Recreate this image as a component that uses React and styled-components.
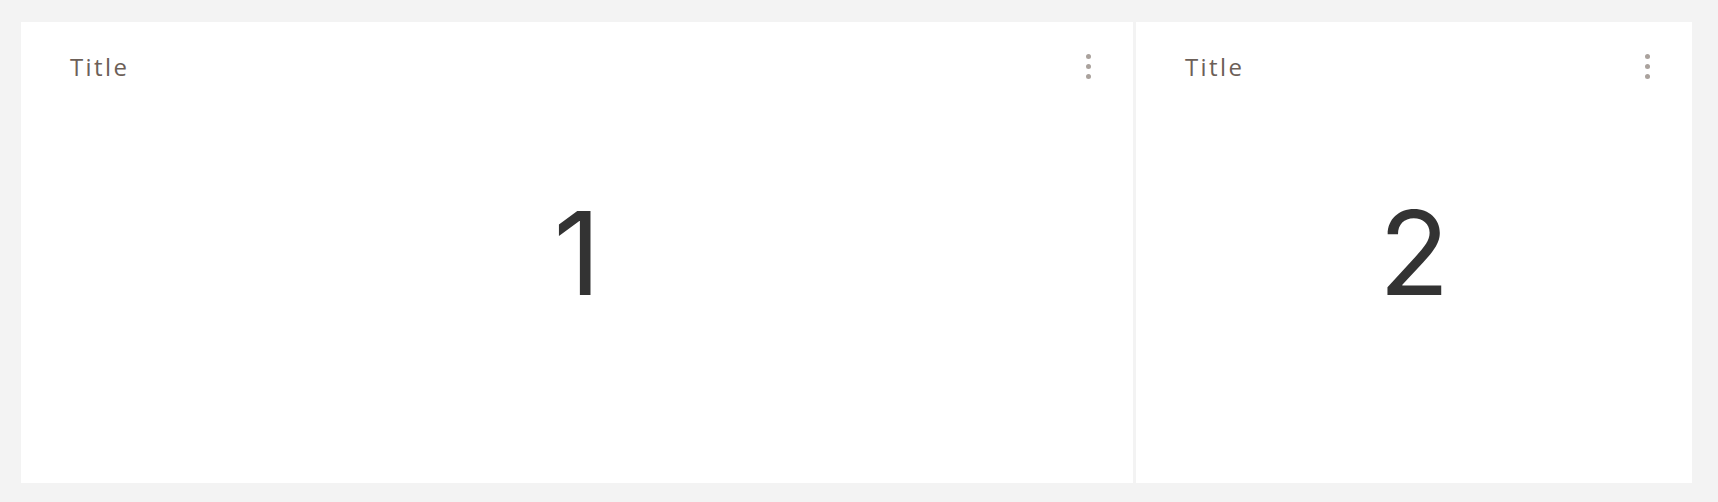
import React from 'react';
import styled, { createGlobalStyle } from 'styled-components';

const GlobalStyle = createGlobalStyle`
  html, body {
    margin: 0;
    padding: 0;
    background: #f3f3f3;
  }
  body {
    font-family: "Open Sans", "Liberation Sans", sans-serif;
  }
`;

const Board = styled.div`
  display: grid;
  grid-template-columns: 2fr 1fr;
  gap: 3px;
  padding: 22px 26px 19px 21px;
  height: 502px;
  box-sizing: border-box;
`;

const Card = styled.section`
  position: relative;
  background: #fff;
  display: flex;
  align-items: center;
  justify-content: center;
`;

const Header = styled.header`
  position: absolute;
  top: 0;
  left: 0;
  right: 0;
  display: flex;
  align-items: center;
  justify-content: space-between;
  padding: 28px 42px 0 49px;
`;

const Title = styled.h2`
  margin: 0;
  font-size: 24px;
  font-weight: 400;
  letter-spacing: 2.4px;
  color: #6c6058;
`;

const MenuButton = styled.button`
  display: flex;
  flex-direction: column;
  gap: 4.5px;
  padding: 0;
  border: 0;
  background: none;
  cursor: pointer;

  span {
    width: 5.5px;
    height: 5.5px;
    border-radius: 50%;
    background: #aaa29d;
  }
`;

const Value = styled.div`
  font-family: "Inter", "Liberation Sans", sans-serif;
  font-size: 116px;
  font-weight: 400;
  line-height: 1;
  color: #333;
`;

const cards = [
  { id: 1, title: 'Title', value: '1' },
  { id: 2, title: 'Title', value: '2' },
];

const App = () => (
  <>
    <GlobalStyle />
    <Board>
      {cards.map((c) => (
        <Card key={c.id}>
          <Header>
            <Title>{c.title}</Title>
            <MenuButton aria-label="More">
              <span />
              <span />
              <span />
            </MenuButton>
          </Header>
          <Value>{c.value}</Value>
        </Card>
      ))}
    </Board>
  </>
);

export default App;
